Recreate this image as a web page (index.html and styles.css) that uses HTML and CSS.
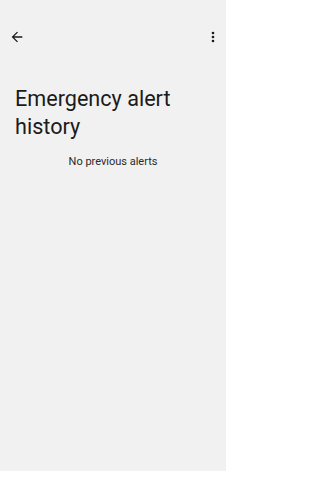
FILE: index.html
```html
<!DOCTYPE html>
<html lang="en">
<head>
<meta charset="utf-8">
<title>Emergency alert history</title>
<link rel="stylesheet" href="styles.css">
</head>
<body>
<div class="screen">
  <div class="topbar">
    <button class="icon-btn" aria-label="Back">
      <svg viewBox="0 0 24 24" class="icon"><path d="M20 11H7.83l5.59-5.59L12 4l-8 8 8 8 1.41-1.41L7.83 13H20v-2z"/></svg>
    </button>
    <button class="icon-btn" aria-label="More options">
      <svg viewBox="0 0 24 24" class="icon"><circle cx="12" cy="6" r="2"/><circle cx="12" cy="12" r="2"/><circle cx="12" cy="18" r="2"/></svg>
    </button>
  </div>
  <h1 class="title">Emergency alert history</h1>
  <p class="empty">No previous alerts</p>
</div>
<div class="navbar"></div>
</body>
</html>
```
FILE: styles.css
```css
html, body {
  margin: 0;
  padding: 0;
}
body {
  width: 226px;
  height: 500px;
  background: #ffffff;
  font-family: Roboto, "Noto Sans", sans-serif;
  overflow: hidden;
}
.screen {
  height: 471px;
  background: #f1f1f1;
  display: flex;
  flex-direction: column;
}
.topbar {
  display: flex;
  justify-content: space-between;
  align-items: center;
  padding: 29px 5px 0 9px;
  height: 16px;
}
.icon-btn {
  border: 0;
  background: none;
  padding: 0;
  width: 16px;
  height: 16px;
  display: flex;
  align-items: center;
  justify-content: center;
}
.icon {
  width: 16px;
  height: 16px;
  fill: #1b1b1b;
}
.title {
  margin: 40px 0 0 15px;
  font-size: 21.6px;
  line-height: 28px;
  font-weight: 400;
  color: #1b1b1b;
  width: 190px;
}
.empty {
  margin: 14px 0 0 0;
  text-align: center;
  font-size: 11px;
  line-height: 14px;
  color: #2a2a2a;
}
.navbar {
  height: 29px;
  background: #ffffff;
}
```
